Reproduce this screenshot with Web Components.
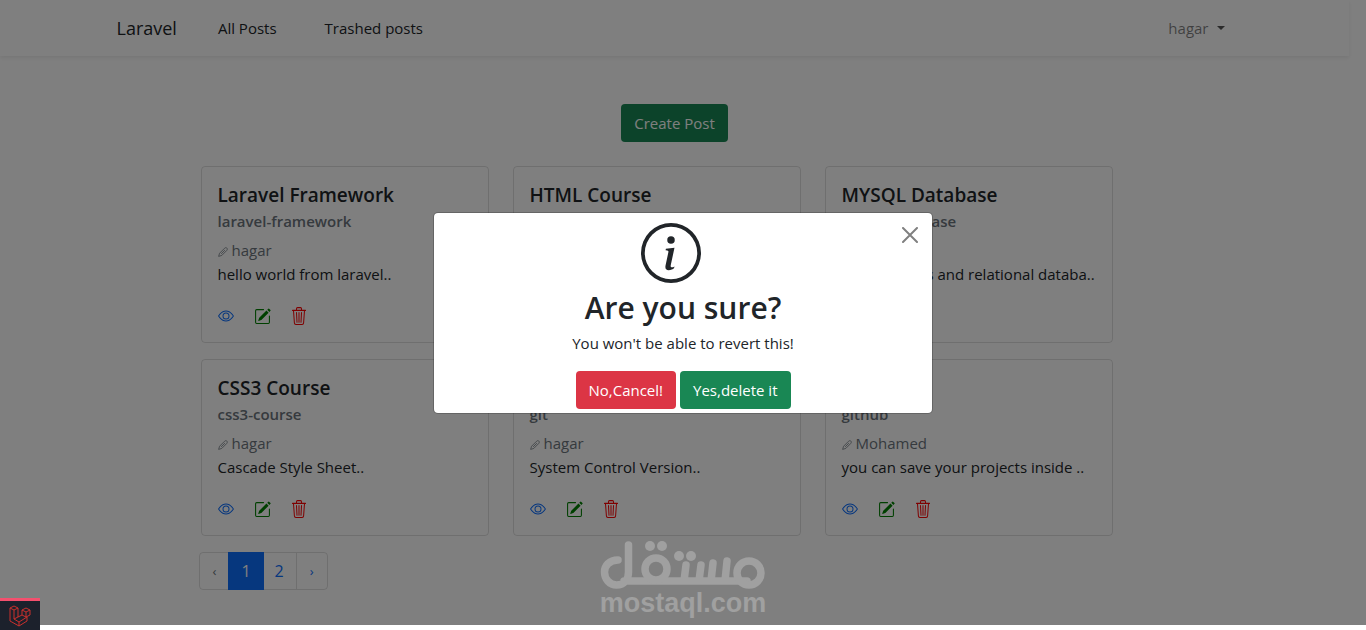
<!DOCTYPE html>
<html lang="en">
<head>
<meta charset="utf-8">
<title>Laravel</title>
<style>
html, body { margin: 0; background: #fff; }
body { font: 15px/24px "Open Sans", "Noto Sans", sans-serif; color: #212529; }
</style>
</head>
<body>
<posts-app></posts-app>

<template id="t-app">
<style>
:host { display: block; min-height: 100vh; overflow: hidden; }
.page { padding-right: 17px; }
.container { max-width: 1116px; margin: 0 auto; }
.create { display: flex; justify-content: center; margin: 48px 0 24px; }
.posts { max-width: 912px; margin-left: 84px; }
.grid { display: grid; grid-template-columns: repeat(3, minmax(0, 1fr)); gap: 16px 24px; }
.pages { margin: 16px 0 0 -2px; }
</style>
<div class="page">
  <site-nav user="hagar"></site-nav>
  <main class="container">
    <div class="create"><app-button variant="success">Create Post</app-button></div>
    <div class="posts">
      <div class="grid">
        <post-card heading="Laravel Framework" slug="laravel-framework" author="hagar">hello world from laravel..</post-card>
        <post-card heading="HTML Course" slug="html-course" author="hagar">Hyper Text Markup..</post-card>
        <post-card heading="MYSQL Database" slug="mysql-database" author="hagar">learn queries and relational databa..</post-card>
        <post-card heading="CSS3 Course" slug="css3-course" author="hagar">Cascade Style Sheet..</post-card>
        <post-card heading="Git" slug="git" author="hagar">System Control Version..</post-card>
        <post-card heading="Github" slug="github" author="Mohamed">you can save your projects inside ..</post-card>
      </div>
      <page-links class="pages"></page-links>
    </div>
  </main>
</div>
<confirm-modal>
  <span slot="title">Are you sure?</span>
  <span slot="text">You won't be able to revert this!</span>
  <app-button slot="actions" variant="danger">No,Cancel!</app-button>
  <app-button slot="actions" variant="success">Yes,delete it</app-button>
</confirm-modal>
<water-mark></water-mark>
<debug-badge></debug-badge>
</template>

<template id="t-nav">
<style>
:host { display: block; box-shadow: 0 2px 4px rgba(0,0,0,.075); }
nav { max-width: 1116px; margin: 0 auto; display: flex; align-items: center; height: 56px; }
a { color: #212529; text-decoration: none; }
.brand { font-size: 18px; margin-right: 41px; }
.link { margin-right: 48px; }
.user { margin: 0 8px 0 auto; display: flex; align-items: center; gap: 8px; color: rgba(0,0,0,.5); font: inherit; background: none; border: 0; padding: 0; }
.user::after { content: ""; border: 4px solid transparent; border-top-color: #555; border-bottom: 0; }
</style>
<nav>
  <a class="brand" href="#">Laravel</a>
  <a class="link" href="#">All Posts</a>
  <a class="link" href="#">Trashed posts</a>
  <button class="user" type="button"></button>
</nav>
</template>

<template id="t-button">
<style>
:host { display: inline-block; }
button { display: block; font: inherit; color: #fff; background: #198754; border: 0; border-radius: 4px; padding: 7px 13px; white-space: nowrap; }
:host([variant="danger"]) button { background: #dc3545; }
</style>
<button type="button"><slot></slot></button>
</template>

<template id="t-card">
<style>
:host { display: block; border: 1px solid rgba(0,0,0,.125); border-radius: 4px; padding: 16px; }
h5, h6, p { margin: 0; white-space: nowrap; }
h5 { font-size: 19px; line-height: 24px; font-weight: 600; }
h6 { font-size: 15px; line-height: 20px; font-weight: 600; color: #6c757d; margin: 4px 0 7px; }
.author { display: flex; align-items: center; gap: 4px; color: #6c757d; }
.author svg { width: 10px; height: 10px; padding-top: 3px; }
.tools { display: flex; align-items: center; gap: 20px; margin-top: 20px; height: 20px; }
.tools a { display: flex; }
svg { display: block; width: 16px; height: 16px; fill: currentColor; }
.view { color: #0d6efd; }
.edit { color: green; }
.edit svg { width: 17px; height: 17px; }
.drop { color: red; }
.drop svg { width: 16px; height: 18px; }
</style>
<h5></h5>
<h6></h6>
<p class="author"><svg viewBox="0 0 16 16"><path d="M1 15 2.500 10 10.500 2c2.500-2.500 6 .5 3.500 3.500L6 13.500zM11 5 5 11" fill="none" stroke="currentColor" stroke-width="1.200"/></svg><span></span></p>
<p><slot></slot></p>
<div class="tools">
  <a class="view" href="#" aria-label="View"><svg viewBox="0 0 16 16"><path d="M16 8s-3-5.500-8-5.500S0 8 0 8s3 5.500 8 5.500S16 8 16 8zM1.173 8a13.133 13.133 0 0 1 1.660-2.043C4.120 4.668 5.880 3.500 8 3.500c2.120 0 3.879 1.168 5.168 2.457A13.133 13.133 0 0 1 14.828 8c-.058.087-.122.183-.195.288-.335.480-.830 1.120-1.465 1.755C11.879 11.332 10.119 12.500 8 12.500c-2.120 0-3.879-1.168-5.168-2.457A13.134 13.134 0 0 1 1.172 8z"/><path d="M8 5.500a2.500 2.500 0 1 0 0 5 2.500 2.500 0 0 0 0-5zM4.500 8a3.500 3.500 0 1 1 7 0 3.500 3.500 0 0 1-7 0z"/></svg></a>
  <a class="edit" href="#" aria-label="Edit"><svg viewBox="0 0 16 16"><path d="M15.502 1.940a.5.5 0 0 1 0 .706L14.459 3.690l-2-2L13.502.646a.5.5 0 0 1 .707 0l1.293 1.293zm-1.750 2.456-2-2L4.939 9.210a.5.5 0 0 0-.121.196l-.805 2.414a.25.25 0 0 0 .316.316l2.414-.805a.5.5 0 0 0 .196-.120l6.813-6.814z"/><path fill-rule="evenodd" d="M1 13.500A1.500 1.500 0 0 0 2.500 15h11a1.500 1.500 0 0 0 1.500-1.500v-6a.5.5 0 0 0-1 0v6a.5.5 0 0 1-.5.5h-11a.5.5 0 0 1-.5-.5v-11a.5.5 0 0 1 .5-.5H9a.5.5 0 0 0 0-1H2.500A1.500 1.500 0 0 0 1 2.500v11z"/></svg></a>
  <a class="drop" href="#" aria-label="Delete"><svg viewBox="0 0 16 16" preserveAspectRatio="none"><path d="M6.500 1h3a.5.5 0 0 1 .5.5v1H6v-1a.5.5 0 0 1 .5-.5ZM11 2.500v-1A1.500 1.500 0 0 0 9.500 0h-3A1.500 1.500 0 0 0 5 1.500v1H1.500a.5.5 0 0 0 0 1h.538l.853 10.660A2 2 0 0 0 4.885 16h6.230a2 2 0 0 0 1.994-1.840l.853-10.660h.538a.5.5 0 0 0 0-1H11Zm1.958 1-.846 10.580a1 1 0 0 1-.997.920h-6.230a1 1 0 0 1-.997-.920L3.042 3.500h9.916Zm-7.487 1a.5.5 0 0 1 .528.470l.5 8.500a.5.5 0 0 1-.998.060L5 5.030a.5.5 0 0 1 .471-.530Zm5.058 0a.5.5 0 0 1 .470.530l-.5 8.500a.5.5 0 1 1-.998-.060l.5-8.500a.5.5 0 0 1 .528-.470ZM8 4.500a.5.5 0 0 1 .5.5v8.500a.5.5 0 0 1-1 0V5a.5.5 0 0 1 .5-.5Z"/></svg></a>
</div>
</template>

<template id="t-pages">
<style>
:host { display: block; }
nav { display: inline-flex; border: 1px solid rgba(0,0,0,.125); border-radius: 4px; }
a { padding: 6px 12px; color: #0d6efd; text-decoration: none; font-size: 16px; }
a + a { border-left: 1px solid rgba(0,0,0,.125); }
.arrow { font-size: 13px; padding: 6px 13px; }
.off { color: #6c757d; }
.on { background: #0d6efd; color: #fff; margin: -1px; padding: 7px 13px; border: 0; }
.on + a { border: 0; }
</style>
<nav aria-label="Pages"><a class="arrow off" href="#">‹</a><a class="on" href="#">1</a><a href="#">2</a><a class="arrow" href="#">›</a></nav>
</template>

<template id="t-modal">
<style>
:host { display: block; }
.backdrop { position: absolute; inset: 0 0 5px; background: rgba(0,0,0,.5); display: flex; justify-content: center; align-items: center; }
section { position: relative; box-sizing: border-box; width: 500px; max-width: 100%; border: 1px solid rgba(0,0,0,.2); border-radius: 5px; background: #fff; background-clip: padding-box; text-align: center; padding: 10px 0 4px; }
.info { display: block; width: 60px; height: 60px; margin: 0 auto; padding-right: 24px; fill: #212529; }
h2 { margin: 6px 0 4px; font-size: 30px; line-height: 38px; font-weight: 600; }
p { margin: 0 0 16px; }
.actions { display: flex; justify-content: center; gap: 4px; }
.close { position: absolute; top: 14px; right: 14px; border: 0; background: none; padding: 0; width: 16px; height: 16px; color: #808080; }
.close svg { display: block; width: 16px; height: 16px; }
</style>
<div class="backdrop">
  <section role="dialog" aria-label="Are you sure?">
    <button class="close" type="button" aria-label="Close"><svg viewBox="0 0 16 16"><path d="M1 1l14 14M15 1L1 15" stroke="currentColor" stroke-width="2" stroke-linecap="round"/></svg></button>
    <svg class="info" viewBox="0 0 16 16"><path d="M8 15A7 7 0 1 1 8 1a7 7 0 0 1 0 14zm0 1A8 8 0 1 0 8 0a8 8 0 0 0 0 16z"/><path d="m8.930 6.588-2.290.287-.082.380.450.083c.294.070.352.176.288.469l-.738 3.468c-.194.897.105 1.319.808 1.319.545 0 1.178-.252 1.465-.598l.088-.416c-.2.176-.492.246-.686.246-.275 0-.375-.193-.304-.533L8.930 6.588zM9 4.500a1 1 0 1 1-2 0 1 1 0 0 1 2 0z"/></svg>
    <h2><slot name="title"></slot></h2>
    <p><slot name="text"></slot></p>
    <div class="actions"><slot name="actions"></slot></div>
  </section>
</div>
</template>

<template id="t-mark">
<style>
:host { position: absolute; bottom: 14px; left: 50%; margin-left: -83px; width: 166px; color: #a0a0a0; pointer-events: none; }
svg { display: block; width: 166px; height: 50px; }
span { display: flex; justify-content: center; font: bold 27px/26px "Liberation Sans", Arial, sans-serif; }
</style>
<svg viewBox="0 0 166 50" role="img" aria-label="مستقل" fill="none" stroke="currentColor" stroke-width="7.500" stroke-linecap="round">
  <path d="M18 20C9 20 4.500 26 4.500 32c0 7 5 13 12 13 8 0 12-6 12-13V5M24 41H147M84 41l2-16M99 41l2-16M111 41l2-18M125 41l2-20"/>
  <circle cx="56" cy="29" r="11"/><circle cx="149" cy="33" r="12"/>
  <g fill="currentColor" stroke="none"><circle cx="50" cy="6" r="5"/><circle cx="62" cy="6" r="5"/><circle cx="79" cy="16" r="5"/><circle cx="91" cy="16" r="5"/></g>
</svg>
<span>mostaql.com</span>
</template>

<template id="t-debug">
<style>
:host { position: absolute; left: 0; bottom: 0; }
button { display: flex; align-items: center; justify-content: center; box-sizing: border-box; width: 40px; height: 32px; padding: 0; border: 0; border-top: 3px solid #f4506e; background: #1c212c; }
svg { display: block; width: 22px; height: 22px; }
</style>
<button type="button" aria-label="Debug bar"><svg viewBox="0 0 22 22" fill="none" stroke="#c9302c" stroke-linejoin="round"><path d="M1 3l4-2 4 2-4 2zM1 3v13l9 5 8-5v-4M5 5v9l5 3 8-5M9 3v9l-4 2M10 17v4M13 5l4-2 4 2-4 2zM13 5v5l4 2 4-2V5M17 7v5M9 12l4-2"/></svg></button>
</template>

<script>
class Base extends HTMLElement {
  constructor() {
    super();
    this.attachShadow({ mode: "open" }).append(
      document.getElementById(this.constructor.template).content.cloneNode(true));
  }
  put(selector, attribute) {
    this.shadowRoot.querySelector(selector).textContent = this.getAttribute(attribute) || "";
  }
}
class AppButton extends Base { static template = "t-button"; }
class SiteNav extends Base {
  static template = "t-nav";
  connectedCallback() { this.put(".user", "user"); }
}
class PostCard extends Base {
  static template = "t-card";
  connectedCallback() {
    this.put("h5", "heading");
    this.put("h6", "slug");
    this.put(".author span", "author");
  }
}
class PageLinks extends Base { static template = "t-pages"; }
class ConfirmModal extends Base { static template = "t-modal"; }
class WaterMark extends Base { static template = "t-mark"; }
class DebugBadge extends Base { static template = "t-debug"; }
class PostsApp extends Base { static template = "t-app"; }
customElements.define("app-button", AppButton);
customElements.define("site-nav", SiteNav);
customElements.define("post-card", PostCard);
customElements.define("page-links", PageLinks);
customElements.define("confirm-modal", ConfirmModal);
customElements.define("water-mark", WaterMark);
customElements.define("debug-badge", DebugBadge);
customElements.define("posts-app", PostsApp);
</script>
</body>
</html>
